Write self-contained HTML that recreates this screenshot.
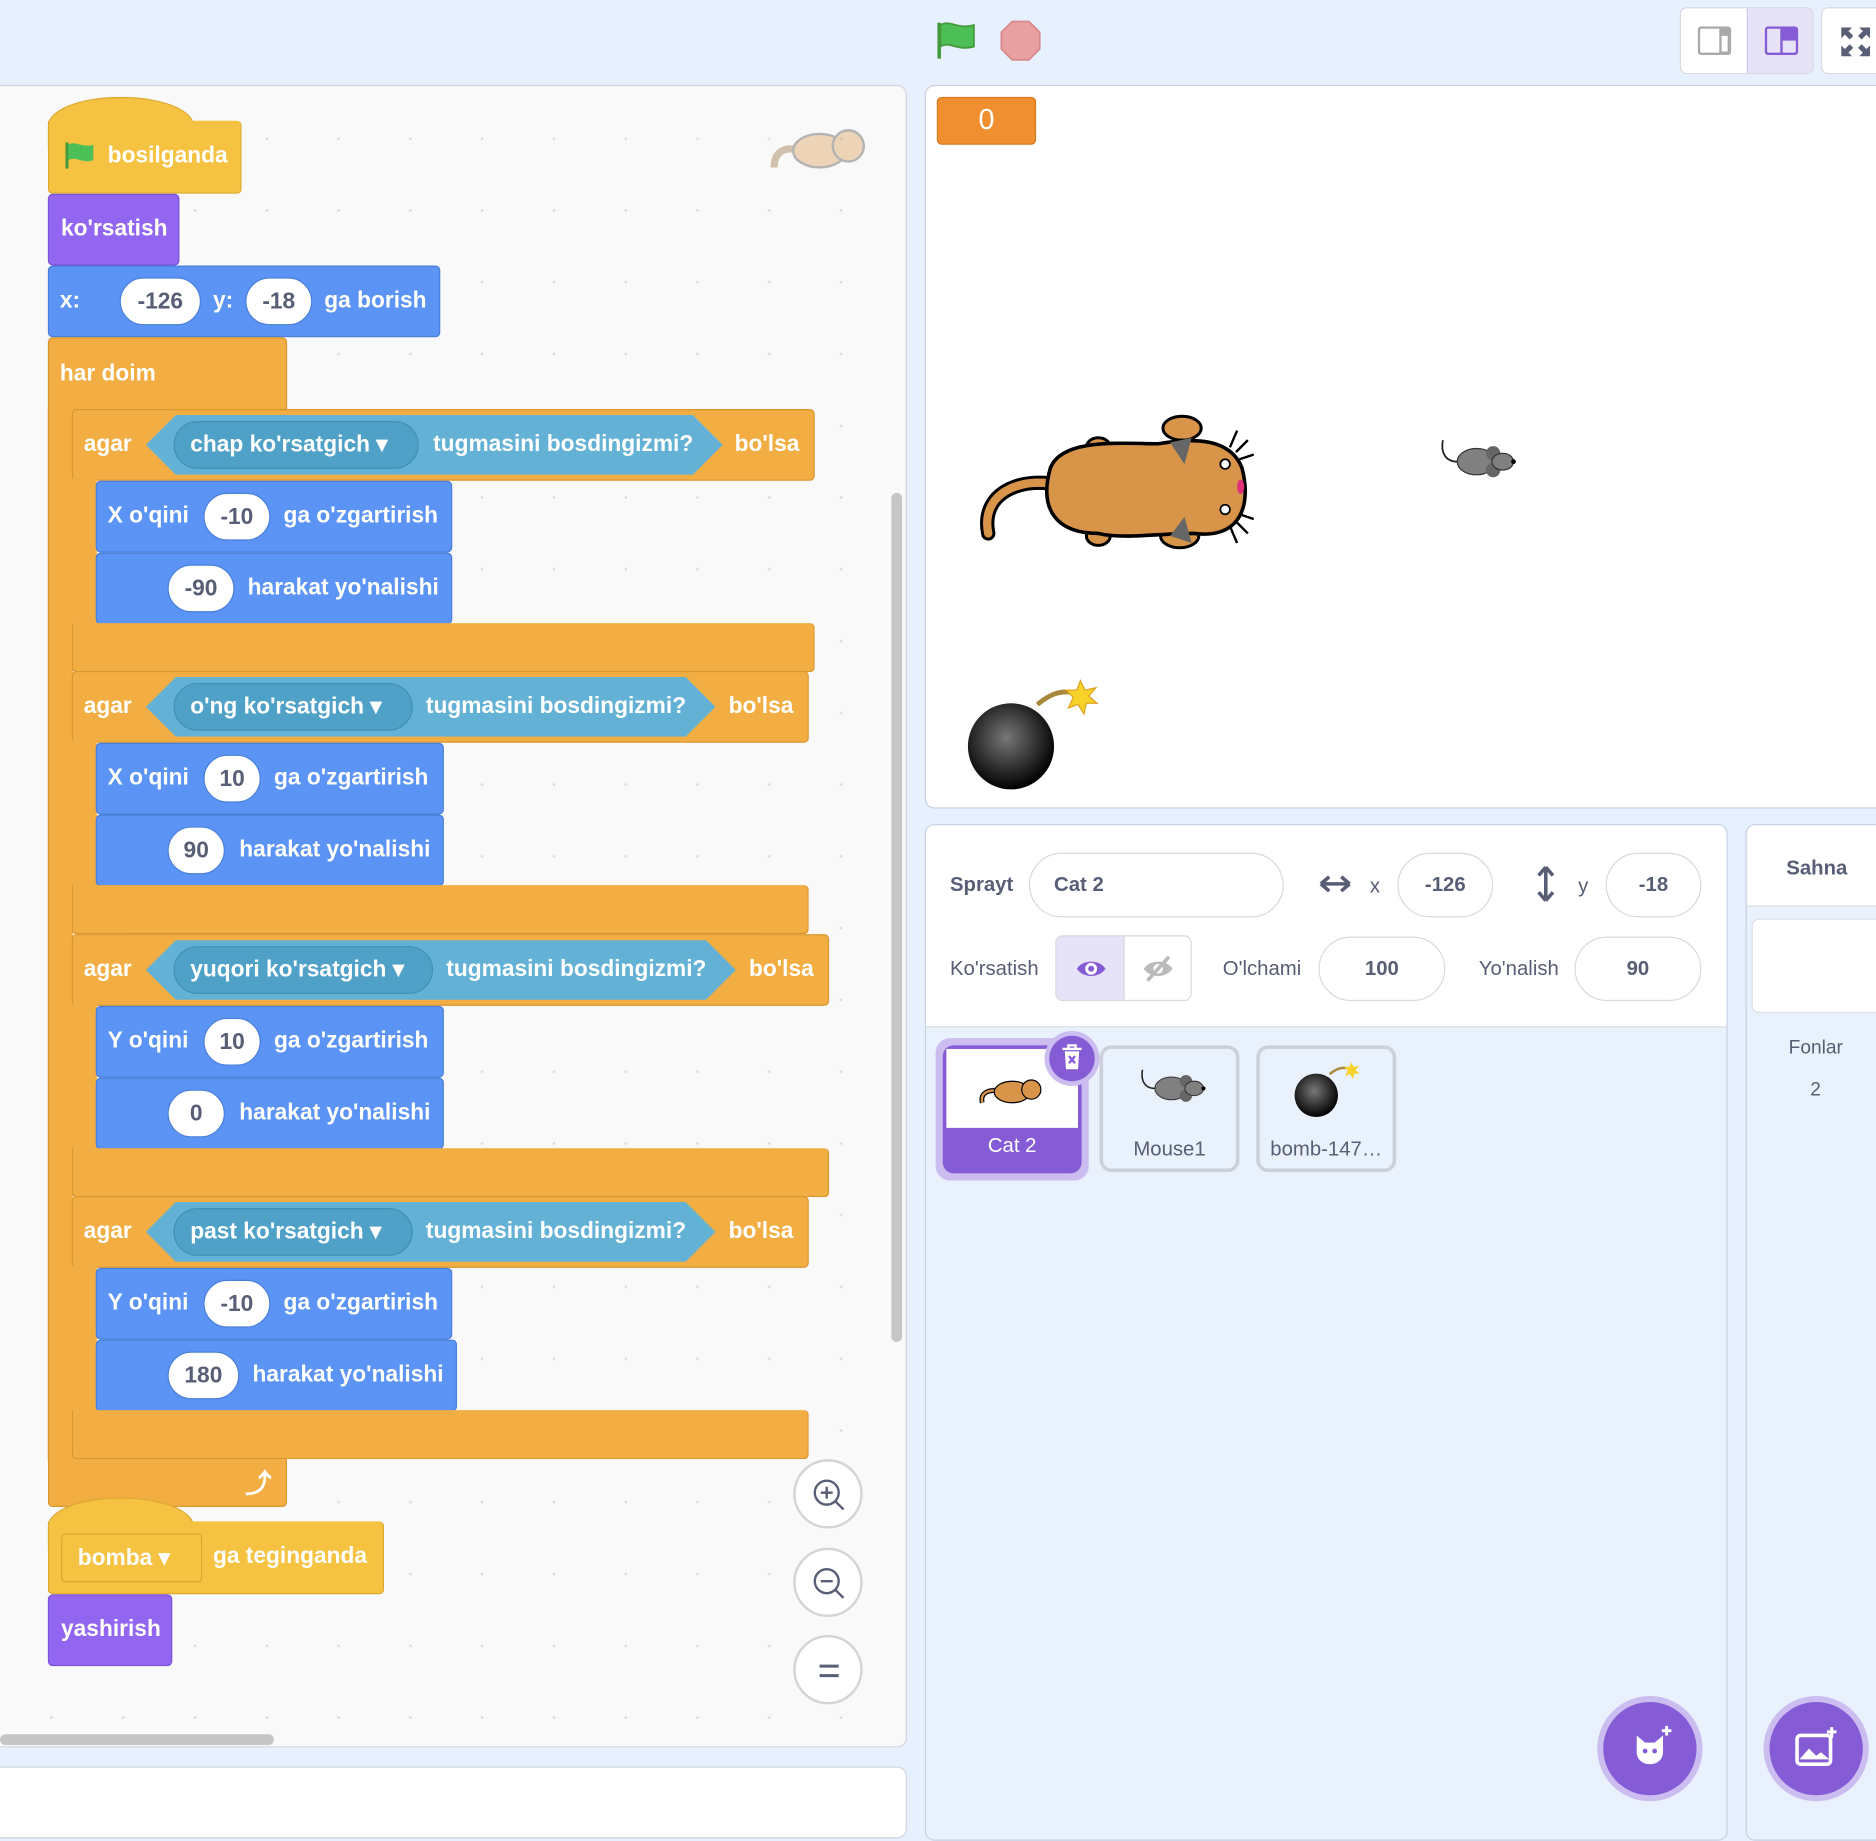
<!DOCTYPE html>
<html><head><meta charset="utf-8">
<style>
*{box-sizing:border-box;margin:0;padding:0}
html,body{width:1876px;height:1818px;overflow:hidden;background:#e6f0ff;font-family:"Liberation Sans",sans-serif}
#w{position:absolute;left:0;top:0;width:1568px;height:1520px;transform:scale(1.19643,1.19605);transform-origin:0 0;background:#e6f0ff}
.a{position:absolute}
.b{position:absolute;border-radius:4px;color:#fff;font-size:19px;font-weight:bold}
.t{position:absolute;top:50%;transform:translateY(-50%);white-space:nowrap;color:#fff;font-size:19px;font-weight:bold}
.ev{background:#f5c242;border:1px solid #d9a830}
.lo{background:#9366f2;border:1px solid #7a52d6}
.mo{background:#5b94f5;border:1px solid #4a7fd9}
.co{background:#f2ae42;border:1px solid #d9952e}
.pill{position:absolute;background:#fff;border-radius:20px;color:#575e75;text-align:center;font-size:19px;font-weight:bold;height:40px;line-height:40px;border:1px solid #4a7fd9}
.sens{position:absolute;background:#63b2d6;height:50px;clip-path:polygon(0 50%,25px 0,calc(100% - 25px) 0,100% 50%,calc(100% - 25px) 100%,25px 100%)}
.dd{position:absolute;background:#4fa1c8;border-radius:20px;height:40px;top:5px;border:1px solid #4090b5}
.g{color:#575e75;font-size:17px;position:absolute;white-space:nowrap}
.in{position:absolute;background:#fff;border:1px solid #d9d9d9;border-radius:27px;height:54px;color:#575e75;font-size:17px;font-weight:bold;line-height:52px;text-align:center}
.zb{position:absolute;width:58px;height:58px;border-radius:50%;background:#fff;border:2px solid #d3d3d8}
</style></head><body><div id="w">

<svg class="a" style="left:780px;top:16px" width="40" height="36" viewBox="0 0 40 36"><path d="M5 3v30" stroke="#45993d" stroke-width="3"/><path d="M6 5c8-5 14 4 28 0v18c-14 4-20-5-28 0z" fill="#4cbf56" stroke="#45993d" stroke-width="1.5"/></svg>
<svg class="a" style="left:835px;top:16px" width="36" height="36" viewBox="0 0 36 36"><polygon points="11,2 25,2 34,11 34,25 25,34 11,34 2,25 2,11" fill="#e8a0a0" stroke="#d88a8a" stroke-width="1.5"/></svg>
<div class="a" style="left:1404px;top:6px;width:112px;height:56px;border:1px solid #d9d9e0;border-radius:6px;background:#fff;overflow:hidden">
 <div class="a" style="left:55px;top:0;width:57px;height:56px;background:#e6e2f7;border-left:1px solid #cfc8e8"></div>
 <svg class="a" style="left:14px;top:15px" width="28" height="24"><rect x="1" y="1" width="26" height="22" rx="2" fill="none" stroke="#aaa" stroke-width="2"/><rect x="18" y="1" width="9" height="22" fill="#aaa"/><rect x="20" y="8" width="5" height="13" fill="#fff"/></svg>
 <svg class="a" style="left:70px;top:15px" width="28" height="24"><rect x="1" y="1" width="26" height="22" rx="2" fill="none" stroke="#855cd6" stroke-width="2"/><rect x="14" y="1" width="13" height="10" fill="#855cd6"/><path d="M14 1v22M14 11h13" stroke="#855cd6" stroke-width="2"/></svg>
</div>
<div class="a" style="left:1522px;top:6px;width:60px;height:56px;border:1px solid #d9d9e0;border-radius:6px;background:#fff">
 <svg class="a" style="left:14px;top:14px" width="28" height="28" viewBox="0 0 28 28" fill="#575e75"><path d="M2 2h9L8 5l4 4-3 3-4-4-3 3zM26 2v9l-3-3-4 4-3-3 4-4-3-3zM2 26v-9l3 3 4-4 3 3-4 4 3 3zM26 26h-9l3-3-4-4 3-3 4 4 3-3z"/></svg>
</div>

<div class="a" style="left:-10px;top:71px;width:768px;height:1390px;background-color:#f9f9f9;border:1px solid #d0d4de;border-radius:8px;background-image:radial-gradient(circle,#dcdcdc 1px,transparent 1.3px);background-size:60px 60px;background-position:22px 14px;overflow:hidden">
</div>
<div class="a" style="left:-10px;top:1477px;width:768px;height:60px;background:#fff;border:1px solid #d0d4de;border-radius:8px"></div>
<div class="a" style="left:745px;top:412px;width:9px;height:710px;background:#c6c6c6;border-radius:5px"></div>
<div class="a" style="left:0;top:1450px;width:229px;height:9px;background:#c6c6c6;border-radius:5px"></div>

<svg class="a" style="left:643px;top:100px;opacity:.35" width="86" height="50" viewBox="0 0 86 50"><path d="M4 40c0-14 10-18 22-14" stroke="#8a5a20" stroke-width="6" fill="none"/><ellipse cx="42" cy="26" rx="22" ry="14" fill="#d8913f" stroke="#333" stroke-width="2"/><circle cx="66" cy="22" r="13" fill="#d8913f" stroke="#333" stroke-width="2"/></svg>

<div class="a" style="left:40px;top:81px;width:122px;height:44px;background:#f5c242;border-radius:60px 60px 0 0 / 24px 24px 0 0;border:1px solid #d9a830"></div>
<div class="b ev" style="left:40px;top:101px;width:162px;height:61px;border-top:none;border-radius:0 4px 4px 4px"><svg class="a" style="left:12px;top:16px" width="28" height="26"><path d="M3 2v22" stroke="#45993d" stroke-width="2.5"/><path d="M4 4c6-4 11 3 21 0v13c-10 3-15-4-21 0z" fill="#4cbf56"/></svg><span class="t" style="left:49px">bosilganda</span></div>
<div class="b lo" style="left:40px;top:162px;width:110px;height:60px"><span class="t" style="left:10px">ko'rsatish</span></div>
<div class="b mo" style="left:40px;top:222px;width:328px;height:60px"><span class="t" style="left:9px">x:</span><div class="pill" style="left:59px;top:9px;width:68px">-126</div><span class="t" style="left:137px">y:</span><div class="pill" style="left:164px;top:9px;width:56px">-18</div><span class="t" style="left:230px">ga borish</span></div>

<div class="b co" style="left:40px;top:282px;width:200px;height:62px;border-radius:4px 4px 0 0"><span class="t" style="left:9px">har doim</span></div>
<div class="a" style="left:40px;top:342px;width:21px;height:880px;background:#f2ae42;border-left:1px solid #d9952e"></div>
<div class="b co" style="left:40px;top:1219px;width:200px;height:41px;border-radius:0 0 4px 4px;border-top:none"><span class="t" style="left:164px;font-size:22px">⤴</span></div>

<div class="b co" style="left:60px;top:342px;width:621px;height:60px"><span class="t" style="left:9px">agar</span></div>
<div class="sens" style="left:122px;top:347px;width:482px"><div class="dd" style="left:23px;width:205px"><span class="t" style="left:13px">chap ko'rsatgich ▾</span></div><span class="t" style="left:240px">tugmasini bosdingizmi?</span></div>
<span class="t a" style="left:614px;top:372px">bo'lsa</span>
<div class="a" style="left:60px;top:400px;width:21px;height:124px;background:#f2ae42"></div>
<div class="b mo" style="left:80px;top:402px;width:298px;height:60px"><span class="t" style="left:9px">X o'qini</span><div class="pill" style="left:89px;top:9px;width:56px">-10</div><span class="t" style="left:156px">ga o'zgartirish</span></div>
<div class="b mo" style="left:80px;top:462px;width:298px;height:60px"><div class="pill" style="left:59px;top:9px;width:56px">-90</div><span class="t" style="left:126px">harakat yo'nalishi</span></div>
<div class="b co" style="left:60px;top:521px;width:621px;height:41px;border-top:none;border-radius:0 4px 4px 4px"></div>

<div class="b co" style="left:60px;top:561px;width:616px;height:60px"><span class="t" style="left:9px">agar</span></div>
<div class="sens" style="left:122px;top:566px;width:476px"><div class="dd" style="left:23px;width:200px"><span class="t" style="left:13px">o'ng ko'rsatgich ▾</span></div><span class="t" style="left:234px">tugmasini bosdingizmi?</span></div>
<span class="t a" style="left:609px;top:591px">bo'lsa</span>
<div class="a" style="left:60px;top:619px;width:21px;height:124px;background:#f2ae42"></div>
<div class="b mo" style="left:80px;top:621px;width:291px;height:60px"><span class="t" style="left:9px">X o'qini</span><div class="pill" style="left:89px;top:9px;width:48px">10</div><span class="t" style="left:148px">ga o'zgartirish</span></div>
<div class="b mo" style="left:80px;top:681px;width:291px;height:60px"><div class="pill" style="left:59px;top:9px;width:48px">90</div><span class="t" style="left:119px">harakat yo'nalishi</span></div>
<div class="b co" style="left:60px;top:740px;width:616px;height:41px;border-top:none;border-radius:0 4px 4px 4px"></div>

<div class="b co" style="left:60px;top:781px;width:633px;height:60px"><span class="t" style="left:9px">agar</span></div>
<div class="sens" style="left:122px;top:786px;width:493px"><div class="dd" style="left:23px;width:217px"><span class="t" style="left:13px">yuqori ko'rsatgich ▾</span></div><span class="t" style="left:251px">tugmasini bosdingizmi?</span></div>
<span class="t a" style="left:626px;top:811px">bo'lsa</span>
<div class="a" style="left:60px;top:839px;width:21px;height:124px;background:#f2ae42"></div>
<div class="b mo" style="left:80px;top:841px;width:291px;height:60px"><span class="t" style="left:9px">Y o'qini</span><div class="pill" style="left:89px;top:9px;width:48px">10</div><span class="t" style="left:148px">ga o'zgartirish</span></div>
<div class="b mo" style="left:80px;top:901px;width:291px;height:60px"><div class="pill" style="left:59px;top:9px;width:48px">0</div><span class="t" style="left:119px">harakat yo'nalishi</span></div>
<div class="b co" style="left:60px;top:960px;width:633px;height:41px;border-top:none;border-radius:0 4px 4px 4px"></div>

<div class="b co" style="left:60px;top:1000px;width:616px;height:60px"><span class="t" style="left:9px">agar</span></div>
<div class="sens" style="left:122px;top:1005px;width:476px"><div class="dd" style="left:23px;width:200px"><span class="t" style="left:13px">past ko'rsatgich ▾</span></div><span class="t" style="left:234px">tugmasini bosdingizmi?</span></div>
<span class="t a" style="left:609px;top:1030px">bo'lsa</span>
<div class="a" style="left:60px;top:1058px;width:21px;height:124px;background:#f2ae42"></div>
<div class="b mo" style="left:80px;top:1060px;width:298px;height:60px"><span class="t" style="left:9px">Y o'qini</span><div class="pill" style="left:89px;top:9px;width:56px">-10</div><span class="t" style="left:156px">ga o'zgartirish</span></div>
<div class="b mo" style="left:80px;top:1120px;width:302px;height:60px"><div class="pill" style="left:59px;top:9px;width:60px">180</div><span class="t" style="left:130px">harakat yo'nalishi</span></div>
<div class="b co" style="left:60px;top:1179px;width:616px;height:41px;border-top:none;border-radius:0 4px 4px 4px"></div>

<div class="a" style="left:40px;top:1252px;width:122px;height:44px;background:#f5c242;border-radius:60px 60px 0 0 / 24px 24px 0 0;border:1px solid #d9a830"></div>
<div class="b ev" style="left:40px;top:1272px;width:281px;height:61px;border-top:none;border-radius:0 4px 4px 4px"><div class="a" style="left:10px;top:10px;width:118px;height:41px;border:1px solid #d9a830;border-radius:4px;background:#f5c242"><span class="t" style="left:13px">bomba ▾</span></div><span class="t" style="left:137px">ga teginganda</span></div>
<div class="b lo" style="left:40px;top:1333px;width:104px;height:60px"><span class="t" style="left:10px">yashirish</span></div>

<div class="zb" style="left:663px;top:1220px"><svg class="a" style="left:13px;top:13px" width="30" height="30"><circle cx="13" cy="13" r="10" fill="none" stroke="#575e75" stroke-width="2"/><path d="M20 20l7 7M8 13h10M13 8v10" stroke="#575e75" stroke-width="2"/></svg></div>
<div class="zb" style="left:663px;top:1294px"><svg class="a" style="left:13px;top:13px" width="30" height="30"><circle cx="13" cy="13" r="10" fill="none" stroke="#575e75" stroke-width="2"/><path d="M20 20l7 7M8 13h10" stroke="#575e75" stroke-width="2"/></svg></div>
<div class="zb" style="left:663px;top:1367px"><svg class="a" style="left:18px;top:20px" width="20" height="16"><path d="M2 4h16M2 12h16" stroke="#575e75" stroke-width="2.5"/></svg></div>

<div class="a" style="left:773px;top:71px;width:810px;height:605px;background:#fff;border:1px solid #c8d0df;border-radius:8px;overflow:hidden">
 <div class="a" style="left:9px;top:9px;width:83px;height:40px;background:#f08f2f;border:1px solid #d97a1e;border-radius:4px;color:#fff;font-size:24px;text-align:center;line-height:38px">0</div>
 <svg class="a" style="left:44px;top:264px" width="230" height="128" viewBox="0 0 230 128">
  <path d="M8 110c-6-30 20-45 50-42" stroke="#000" stroke-width="12" fill="none" stroke-linecap="round"/>
  <path d="M8 110c-6-30 20-45 50-42" stroke="#d8954a" stroke-width="7" fill="none" stroke-linecap="round"/>
  <ellipse cx="100" cy="38" rx="10" ry="8" fill="#d8954a" stroke="#000" stroke-width="2.5"/>
  <ellipse cx="100" cy="112" rx="10" ry="8" fill="#d8954a" stroke="#000" stroke-width="2.5"/>
  <ellipse cx="170" cy="22" rx="16" ry="10" fill="#d8954a" stroke="#000" stroke-width="2.5"/>
  <ellipse cx="168" cy="112" rx="16" ry="10" fill="#d8954a" stroke="#000" stroke-width="2.5"/>
  <path d="M60 55c10-25 60-20 90-20 30-5 60-5 70 20 8 30 0 60-40 55-30 0-60 5-80 0-35 0-50-20-40-55z" fill="#d8954a" stroke="#000" stroke-width="3"/>
  <polygon points="160,34 178,30 172,52" fill="#666"/><polygon points="160,112 178,118 172,96" fill="#666"/>
  <circle cx="206" cy="52" r="4" fill="#fff" stroke="#000" stroke-width="1.5"/><circle cx="206" cy="90" r="4" fill="#fff" stroke="#000" stroke-width="1.5"/>
  <ellipse cx="219" cy="71" rx="3" ry="6" fill="#e0307a"/>
  <path d="M210 38l6-14M215 42l10-10M218 48l12-4M210 104l6 14M215 100l10 10M218 94l12 4" stroke="#000" stroke-width="2"/>
 </svg>
 <svg class="a" style="left:426px;top:292px" width="70" height="44" viewBox="0 0 70 44"><path d="M18 22c-10 0-14-8-12-18" stroke="#222" stroke-width="1.5" fill="none"/><ellipse cx="34" cy="22" rx="16" ry="11" fill="#808080" stroke="#333"/><circle cx="48" cy="15" r="6" fill="#666"/><circle cx="48" cy="29" r="6" fill="#666"/><ellipse cx="56" cy="22" rx="9" ry="7" fill="#808080" stroke="#333"/><circle cx="65" cy="22" r="2" fill="#000"/></svg>
 <svg class="a" style="left:33px;top:495px" width="115" height="95" viewBox="0 0 115 95"><defs><radialGradient id="bg" cx=".45" cy=".4" r=".6"><stop offset="0" stop-color="#777"/><stop offset="1" stop-color="#000"/></radialGradient></defs><path d="M60 22c10-8 18-12 30-10" stroke="#a8893b" stroke-width="4" fill="none"/><polygon points="96,2 100,10 109,8 103,15 110,21 101,21 99,30 94,22 86,25 90,16 84,10 93,10" fill="#f7d22b" stroke="#e0a020"/><circle cx="38" cy="57" r="36" fill="url(#bg)"/></svg>
</div>

<div class="a" style="left:773px;top:689px;width:671px;height:850px;background:#e9f1fc;border:1px solid #c8d0df;border-radius:8px;overflow:hidden">
 <div class="a" style="left:0;top:0;width:671px;height:169px;background:#fff;border-bottom:1px solid #d9dde6"></div>
</div>
<div class="g" style="left:794px;top:730px;font-weight:bold">Sprayt</div>
<div class="in" style="left:860px;top:713px;width:213px;text-align:left;padding-left:20px">Cat 2</div>
<svg class="a" style="left:1100px;top:728px" width="32" height="22"><path d="M4 11h24M4 11l7-6M4 11l7 6M28 11l-7-6M28 11l-7 6" stroke="#575e75" stroke-width="3" fill="none"/></svg>
<div class="g" style="left:1145px;top:731px">x</div>
<div class="in" style="left:1168px;top:713px;width:80px">-126</div>
<svg class="a" style="left:1281px;top:722px" width="22" height="34"><path d="M11 3v28M11 3l-6 7M11 3l6 7M11 31l-6-7M11 31l6-7" stroke="#575e75" stroke-width="3" fill="none"/></svg>
<div class="g" style="left:1319px;top:731px">y</div>
<div class="in" style="left:1342px;top:713px;width:80px">-18</div>

<div class="g" style="left:794px;top:800px">Ko'rsatish</div>
<div class="a" style="left:882px;top:782px;width:114px;height:55px;border:1px solid #d9d9d9;border-radius:6px;background:#fff;overflow:hidden"><div class="a" style="left:0;top:0;width:57px;height:55px;background:#e6e2f7;border-right:1px solid #d9d9d9"></div>
 <svg class="a" style="left:16px;top:17px" width="26" height="20"><path d="M1 10C6 2 20 2 25 10 20 18 6 18 1 10z" fill="#855cd6"/><circle cx="13" cy="10" r="5" fill="#fff"/><circle cx="13" cy="10" r="2.5" fill="#855cd6"/></svg>
 <svg class="a" style="left:72px;top:15px" width="26" height="24"><path d="M1 12C6 4 20 4 25 12 20 20 6 20 1 12z" fill="#bbb"/><circle cx="13" cy="12" r="4" fill="#fff"/><path d="M4 22L22 2" stroke="#bbb" stroke-width="3"/></svg>
</div>
<div class="g" style="left:1022px;top:800px">O'lchami</div>
<div class="in" style="left:1102px;top:783px;width:106px">100</div>
<div class="g" style="left:1236px;top:800px">Yo'nalish</div>
<div class="in" style="left:1316px;top:783px;width:106px">90</div>

<div class="a" style="left:782px;top:868px;width:128px;height:119px;border-radius:12px;background:#cbbdf0"></div>
<div class="a" style="left:788px;top:874px;width:116px;height:107px;border-radius:9px;background:#855cd6;overflow:hidden"><div class="a" style="left:3px;top:3px;width:110px;height:66px;background:#fff"></div><div class="a" style="left:0;top:74px;width:116px;text-align:center;color:#fff;font-size:17px">Cat 2</div>
 <svg class="a" style="left:30px;top:22px" width="56" height="32" viewBox="0 0 56 32"><path d="M3 26c-2-8 5-11 12-10" stroke="#000" stroke-width="4" fill="none"/><path d="M3 26c-2-8 5-11 12-10" stroke="#d8954a" stroke-width="2" fill="none"/><ellipse cx="28" cy="17" rx="15" ry="9" fill="#d8954a" stroke="#000"/><circle cx="44" cy="15" r="8" fill="#d8954a" stroke="#000"/></svg></div>
<div class="a" style="left:873px;top:862px;width:46px;height:46px;border-radius:50%;background:#cbbdf0"></div>
<div class="a" style="left:877px;top:866px;width:38px;height:38px;border-radius:50%;background:#855cd6"><svg class="a" style="left:10px;top:7px" width="18" height="22"><path d="M1 4h16M6 4V1h6v3" stroke="#fff" stroke-width="2" fill="none"/><path d="M3 6h12l-1 15H4z" fill="#fff"/><path d="M6.5 10l5 6M11.5 10l-5 6" stroke="#855cd6" stroke-width="2"/></svg></div>

<div class="a" style="left:919px;top:874px;width:117px;height:106px;border:3px solid #ccd0da;border-radius:10px"><div class="a" style="left:0;top:74px;width:111px;text-align:center;color:#575e75;font-size:17px">Mouse1</div>
 <svg class="a" style="left:26px;top:14px" width="64" height="38" viewBox="0 0 70 44"><path d="M18 22c-10 0-14-8-12-18" stroke="#222" stroke-width="1.5" fill="none"/><ellipse cx="34" cy="22" rx="16" ry="11" fill="#808080" stroke="#333"/><circle cx="48" cy="15" r="6" fill="#666"/><circle cx="48" cy="29" r="6" fill="#666"/><ellipse cx="56" cy="22" rx="9" ry="7" fill="#808080" stroke="#333"/><circle cx="65" cy="22" r="2" fill="#000"/></svg></div>
<div class="a" style="left:1050px;top:874px;width:117px;height:106px;border:3px solid #ccd0da;border-radius:10px"><div class="a" style="left:0;top:74px;width:111px;text-align:center;color:#575e75;font-size:17px">bomb-147…</div>
 <svg class="a" style="left:28px;top:10px" width="58" height="48" viewBox="0 0 115 95"><defs><radialGradient id="bg2" cx=".45" cy=".4" r=".6"><stop offset="0" stop-color="#777"/><stop offset="1" stop-color="#000"/></radialGradient></defs><path d="M60 22c10-8 18-12 30-10" stroke="#a8893b" stroke-width="4" fill="none"/><polygon points="96,2 100,10 109,8 103,15 110,21 101,21 99,30 94,22 86,25 90,16 84,10 93,10" fill="#f7d22b"/><circle cx="38" cy="57" r="36" fill="url(#bg2)"/></svg></div>

<div class="a" style="left:1335px;top:1418px;width:88px;height:88px;border-radius:50%;background:#cbbdf0"></div>
<div class="a" style="left:1340px;top:1423px;width:78px;height:78px;border-radius:50%;background:#855cd6"><svg class="a" style="left:22px;top:18px" width="38" height="38" viewBox="0 0 38 38"><path d="M6 10l7 6h8l7-6v14c0 6-5 10-11 10S6 30 6 24z" fill="#fff"/><circle cx="13" cy="23" r="2" fill="#855cd6"/><circle cx="21" cy="23" r="2" fill="#855cd6"/><path d="M31 2v8M27 6h8" stroke="#fff" stroke-width="2.5"/></svg></div>

<div class="a" style="left:1459px;top:689px;width:130px;height:850px;background:#e9f1fc;border:1px solid #c8d0df;border-radius:8px;overflow:hidden"><div class="a" style="left:0;top:0;width:130px;height:68px;background:#fff;border-bottom:1px solid #d9dde6"></div></div>
<div class="g" style="left:1493px;top:716px;font-weight:bold">Sahna</div>
<div class="a" style="left:1464px;top:768px;width:120px;height:79px;background:#fff;border:1px solid #d9dde6;border-radius:6px"></div>
<div class="g" style="left:1495px;top:868px;font-size:16px">Fonlar</div>
<div class="g" style="left:1513px;top:903px;font-size:16px">2</div>
<div class="a" style="left:1474px;top:1418px;width:88px;height:88px;border-radius:50%;background:#cbbdf0"></div>
<div class="a" style="left:1479px;top:1423px;width:78px;height:78px;border-radius:50%;background:#855cd6"><svg class="a" style="left:20px;top:20px" width="38" height="36" viewBox="0 0 38 36"><rect x="3" y="8" width="28" height="24" rx="3" fill="none" stroke="#fff" stroke-width="3"/><path d="M5 28l8-9 6 6 4-3 7 6z" fill="#fff"/><path d="M32 1v9M28 5h8" stroke="#fff" stroke-width="2.5"/></svg></div>

</div></body></html>
